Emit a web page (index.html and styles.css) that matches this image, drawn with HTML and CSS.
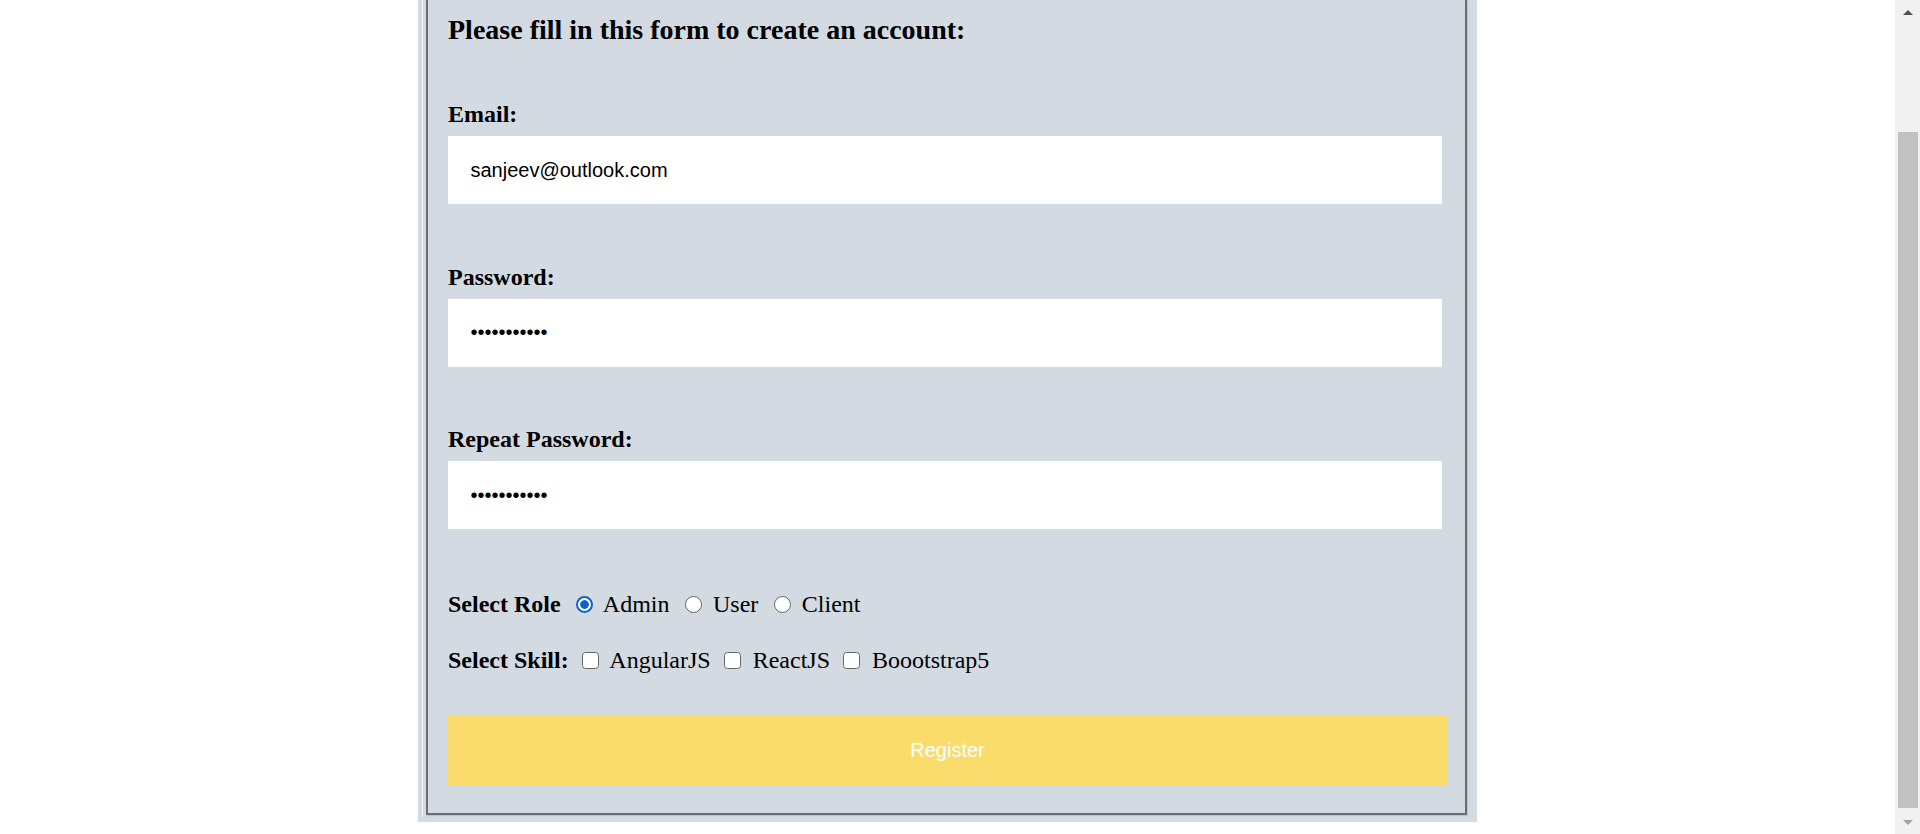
FILE: index.html
```html
<!DOCTYPE html>
<html lang="en">
<head>
<meta charset="utf-8">
<title>Register</title>
<link rel="stylesheet" href="styles.css">
</head>
<body>
<div class="viewport">
  <main class="page">
    <div class="panel">
      <div class="frame">
        <form class="fieldset">
          <h3 class="title">Please fill in this form to create an account:</h3>
          <label class="field-label" for="email">Email:</label>
          <input class="text-input" type="text" id="email" value="sanjeev@outlook.com">
          <label class="field-label" for="psw">Password:</label>
          <input class="text-input" type="password" id="psw" value="sanjeev@123">
          <label class="field-label" for="psw-repeat">Repeat Password:</label>
          <input class="text-input" type="password" id="psw-repeat" value="sanjeev@123">
          <div class="choice-row role-row"><b>Select Role</b> <input class="radio" type="radio" name="role" checked> Admin <input class="radio" type="radio" name="role"> User <input class="radio" type="radio" name="role"> Client</div>
          <div class="choice-row skill-row"><b>Select Skill:</b> <input class="check" type="checkbox"> AngularJS <input class="check" type="checkbox"> ReactJS <input class="check" type="checkbox"> Boootstrap5</div>
          <button class="register-btn" type="button">Register</button>
        </form>
      </div>
    </div>
  </main>
  <div class="scrollbar">
    <div class="sb-btn"><span class="arrow-up"></span></div>
    <div class="sb-track"><div class="sb-thumb"></div></div>
    <div class="sb-btn"><span class="arrow-down"></span></div>
  </div>
</div>
</body>
</html>
```

FILE: styles.css
```css
* { box-sizing: border-box; }

html, body {
  margin: 0;
  padding: 0;
  background: #fff;
}

body {
  font-family: "Liberation Serif", "Times New Roman", serif;
  font-size: 24px;
  color: #000;
}

.viewport {
  display: flex;
  height: 834px;
  overflow: hidden;
}

.page {
  flex: 1;
  padding-left: 418px;
}

.panel {
  width: 1059px;
  background: #d3dae2;
  padding: 0 10px 5px 4px;
}

.frame {
  border-left: 1px solid #f3f5f7;
  padding: 0 0 2px 3px;
}

.fieldset {
  display: block;
  margin: 0;
  border: 2px solid #6d6d6d;
  border-top: none;
  box-shadow: 1px 1px 0 #bfc3c8;
  padding: 13.5px 18px 27px 20px;
}

.title {
  margin: 0;
  font-size: 28px;
  line-height: 32px;
  font-weight: bold;
}

.field-label {
  display: block;
  font-weight: bold;
  line-height: 27.5px;
  margin-top: 59.5px;
}

.title + .field-label {
  margin-top: 55.5px;
}

.text-input {
  display: block;
  width: 994px;
  height: 68px;
  margin: 7.5px 0 0;
  padding: 0 22.5px;
  border: none;
  outline: none;
  background: #fff;
  color: #000;
  font-family: "Liberation Sans", Arial, sans-serif;
  font-size: 20px;
}

.choice-row {
  line-height: 27.5px;
  margin-top: 62px;
  white-space: nowrap;
}

.skill-row {
  margin-top: 28px;
}

.radio {
  -webkit-appearance: none;
  appearance: none;
  display: inline-block;
  width: 17px;
  height: 17px;
  margin: 0 5px -1px 9.5px;
  border: 1.5px solid #666;
  border-radius: 50%;
  background: #fff;
  vertical-align: baseline;
}

.radio:checked {
  border: 2px solid #0b63d0;
  background: radial-gradient(circle at center, #0b63d0 0 4px, #fff 4.6px);
}

.check {
  -webkit-appearance: none;
  appearance: none;
  display: inline-block;
  width: 17px;
  height: 17px;
  margin: 0 6px -1px 7px;
  border: 1.5px solid #666;
  border-radius: 3.5px;
  background: #fff;
  vertical-align: baseline;
}

.register-btn {
  display: block;
  width: 100%;
  height: 71px;
  margin-top: 41px;
  padding: 0;
  border: none;
  background: #f9dc6b;
  color: #fff;
  font-family: "Liberation Sans", Arial, sans-serif;
  font-size: 20px;
}

.scrollbar {
  flex: none;
  width: 25px;
  height: 834px;
  background: #f1f1f1;
  display: flex;
  flex-direction: column;
}

.sb-btn {
  height: 24px;
  display: flex;
  align-items: center;
  justify-content: center;
}

.sb-track {
  flex: 1;
  padding: 108px 2px 2px 3px;
}

.sb-thumb {
  height: 676px;
  background: #c1c1c1;
}

.arrow-up {
  width: 0;
  height: 0;
  border-left: 5px solid transparent;
  border-right: 5px solid transparent;
  border-bottom: 5px solid #505050;
}

.arrow-down {
  width: 0;
  height: 0;
  border-left: 5px solid transparent;
  border-right: 5px solid transparent;
  border-top: 5px solid #a3a3a3;
}
```
